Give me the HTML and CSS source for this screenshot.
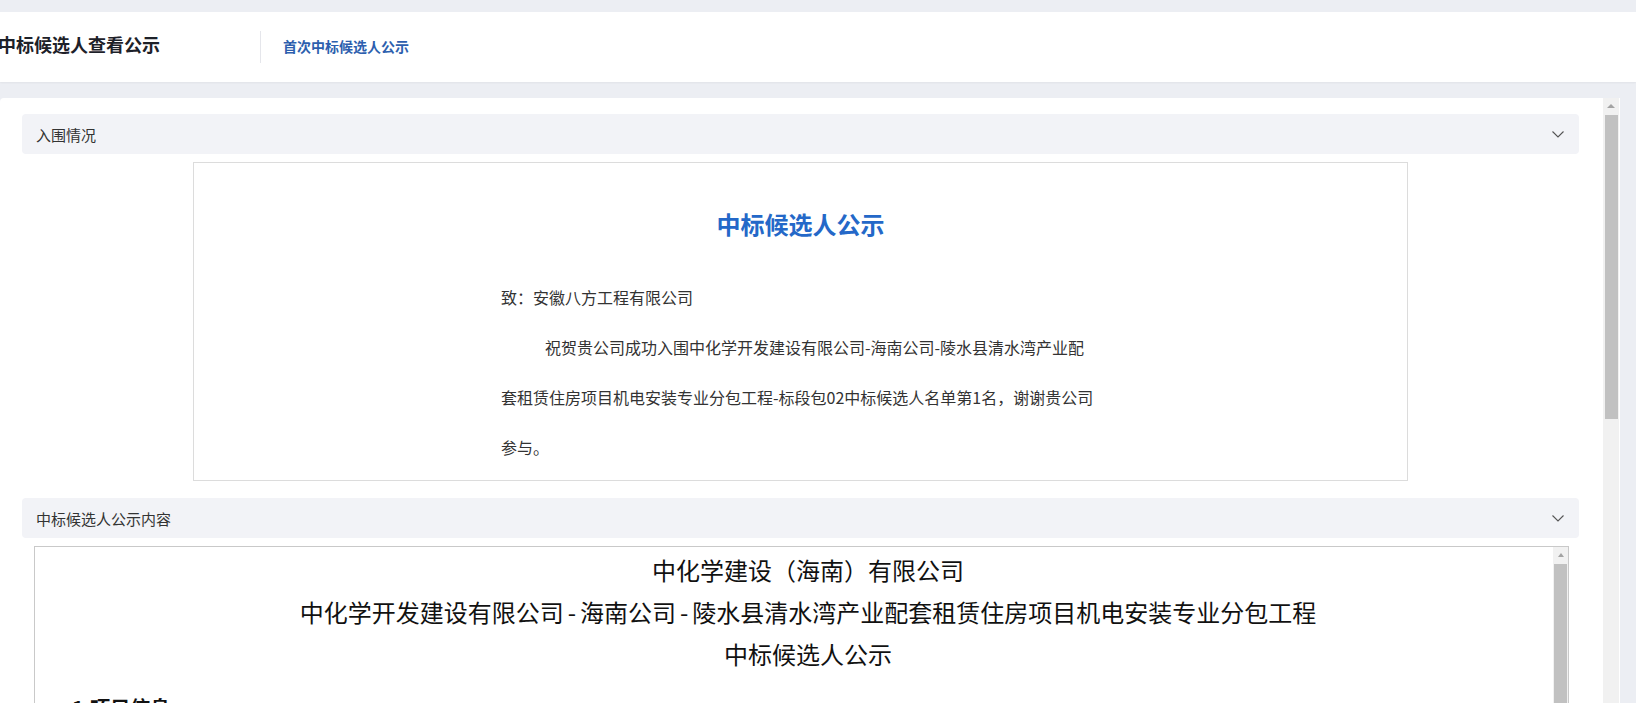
FILE: index.html
```html
<!DOCTYPE html>
<html lang="zh-CN">
<head>
<meta charset="utf-8">
<title>中标候选人查看公示</title>
<link rel="stylesheet" href="styles.css">
</head>
<body>
<div class="page">
  <header class="topbar">
    <h1 class="topbar-title">中标候选人查看公示</h1>
    <span class="topbar-divider"></span>
    <a class="topbar-link">首次中标候选人公示</a>
  </header>
  <main class="panel">
    <div class="panel-body">
      <section class="section">
        <div class="section-head">
          <span class="section-name">入围情况</span>
          <svg class="chevron" width="12" height="7" viewBox="0 0 12 7"><path d="M0.5 0.5 L6 6 L11.5 0.5" fill="none" stroke="#555" stroke-width="1.1"/></svg>
        </div>
        <div class="notice">
          <h2 class="notice-title">中标候选人公示</h2>
          <div class="notice-body">
            <p class="notice-p">致：安徽八方工程有限公司</p>
            <p class="notice-p indent">祝贺贵公司成功入围中化学开发建设有限公司-海南公司-陵水县清水湾产业配套租赁住房项目机电安装专业分包工程-标段包02中标候选人名单第1名，谢谢贵公司参与。</p>
          </div>
        </div>
      </section>
      <section class="section second">
        <div class="section-head">
          <span class="section-name">中标候选人公示内容</span>
          <svg class="chevron" width="12" height="7" viewBox="0 0 12 7"><path d="M0.5 0.5 L6 6 L11.5 0.5" fill="none" stroke="#555" stroke-width="1.1"/></svg>
        </div>
        <div class="frame">
          <div class="doc">
            <p class="doc-line">中化学建设（海南）有限公司</p>
            <p class="doc-line">中化学开发建设有限公司<span class="dash">-</span>海南公司<span class="dash">-</span>陵水县清水湾产业配套租赁住房项目机电安装专业分包工程</p>
            <p class="doc-line">中标候选人公示</p>
            <h3 class="doc-h">1.项目信息</h3>
          </div>
          <div class="scroll inner">
            <span class="scroll-arrow"></span>
            <span class="scroll-thumb"></span>
          </div>
        </div>
      </section>
    </div>
    <div class="scroll outer">
      <span class="scroll-arrow"></span>
      <span class="scroll-thumb"></span>
    </div>
  </main>
</div>
</body>
</html>
```

FILE: styles.css
```css
html, body {
  margin: 0;
  padding: 0;
  height: 703px;
  overflow: hidden;
  background: #eceef3;
  font-family: "Noto Sans CJK SC", "Noto Sans", sans-serif;
}

.page {
  display: flex;
  flex-direction: column;
  padding-top: 12px;
  height: 691px;
}

.topbar {
  flex: none;
  height: 70px;
  background: #ffffff;
  display: flex;
  align-items: center;
  box-shadow: 0 1px 2px rgba(0, 0, 0, 0.05);
}

.topbar-title {
  margin: 0 0 7px -2px;
  font-size: 18px;
  font-weight: 700;
  line-height: 26px;
  color: #1d2129;
}

.topbar-divider {
  width: 1px;
  height: 32px;
  background: #e5e6eb;
  margin-left: 100px;
}

.topbar-link {
  margin: 0 0 2px 22px;
  font-size: 14px;
  font-weight: 600;
  line-height: 20px;
  color: #2d5fae;
}

.panel {
  flex: 1;
  margin-top: 16px;
  width: 1620px;
  background: #ffffff;
  border-radius: 4px 0 0 0;
  display: flex;
  overflow: hidden;
}

.panel-body {
  flex: 1;
  padding: 16px 24px 0 22px;
  overflow: hidden;
}

.section-head {
  height: 40px;
  background: #f2f3f7;
  border-radius: 4px;
  display: flex;
  align-items: center;
  justify-content: space-between;
  padding: 0 15px 0 14px;
}

.section-name {
  font-size: 15px;
  color: #333333;
}

.chevron {
  display: block;
}

.notice {
  width: 1213px;
  margin: 8px auto 0;
  border: 1px solid #dcdcdc;
  padding: 43px 0 8px;
}

.notice-title {
  margin: 0;
  text-align: center;
  font-size: 24px;
  line-height: 36px;
  font-weight: 700;
  color: #2468c8;
}

.notice-body {
  width: 595px;
  padding-right: 4px;
  margin: 30px auto 0;
}

.notice-p {
  margin: 0;
  font-size: 16px;
  line-height: 50px;
  color: #333333;
}

.notice-p.indent {
  text-indent: 44px;
}

.section.second {
  margin-top: 17px;
}

.frame {
  margin: 8px 10px 0 12px;
  height: 400px;
  border: 1px solid #c9c9c9;
  display: flex;
}

.doc {
  flex: 1;
  padding: 2px 0 0 28px;
  color: #111111;
  font-family: "Noto Sans CJK SC", "Liberation Serif", serif;
}

.doc-line {
  margin: 0;
  font-size: 24px;
  line-height: 42px;
  text-align: center;
}

.dash {
  padding: 0 4px;
}

.doc-h {
  margin: 18px 0 0 9px;
  font-size: 20px;
  line-height: 30px;
  font-weight: 700;
}

.scroll {
  flex: none;
  background: #f1f1f1;
  display: flex;
  flex-direction: column;
  align-items: stretch;
}

.scroll.outer {
  width: 16px;
  margin-right: 1px;
}

.scroll.inner {
  width: 15px;
}

.scroll-arrow {
  height: 17px;
  position: relative;
}

.scroll-arrow::after {
  content: "";
  position: absolute;
  left: 50%;
  top: 6px;
  margin-left: -4px;
  border-left: 4px solid transparent;
  border-right: 4px solid transparent;
  border-bottom: 4px solid #a3a3a3;
}

.scroll.outer .scroll-thumb {
  height: 304px;
  margin: 0 1px 0 2px;
  background: #c1c1c1;
}

.scroll.inner .scroll-arrow {
  height: 17px;
}

.scroll.inner .scroll-arrow::after {
  top: 6px;
  margin-left: -3px;
  border-left-width: 3px;
  border-right-width: 3px;
  border-bottom-width: 4px;
}

.scroll.inner .scroll-thumb {
  flex: 1;
  margin: 0 1px;
  background: #c1c1c1;
}
```
